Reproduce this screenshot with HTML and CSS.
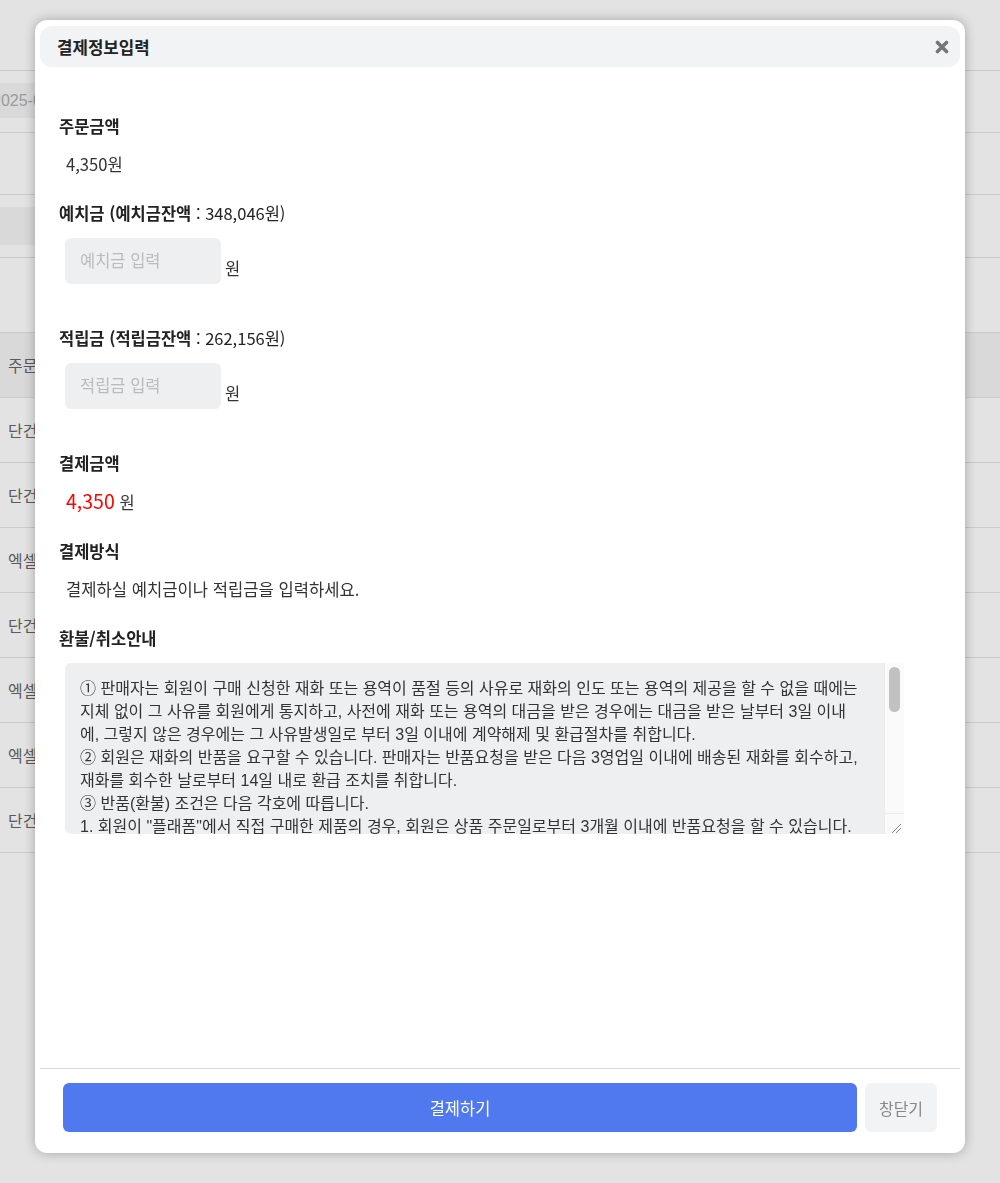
FILE: index.html
```html
<!DOCTYPE html>
<html lang="ko">
<head>
<meta charset="utf-8">
<title>결제정보입력</title>
<link rel="stylesheet" href="styles.css">
</head>
<body>
<div class="page">
  <div class="bg-row r1"></div>
  <div class="bg-row r2"><div class="bg-field">2025-01-01 ~ 2025-01-31</div></div>
  <div class="bg-row r3"></div>
  <div class="bg-row r4"><div class="bg-field tall"></div></div>
  <div class="bg-row r5"></div>
  <div class="bg-row thead"><span>주문구분</span></div>
  <div class="bg-row trow"><span>단건결제</span></div>
  <div class="bg-row trow"><span>단건결제</span></div>
  <div class="bg-row trow"><span>엑셀업로드</span></div>
  <div class="bg-row trow"><span>단건결제</span></div>
  <div class="bg-row trow"><span>엑셀업로드</span></div>
  <div class="bg-row trow"><span>엑셀업로드</span></div>
  <div class="bg-row trow"><span>단건결제</span></div>
</div>

<div class="modal">
  <div class="modal-head">
    <h2 class="modal-title">결제정보입력</h2>
    <button class="close-x" type="button" aria-label="닫기">
      <svg width="14" height="14" viewBox="0 0 14 14"><path d="M2.5 2.5 L11.5 11.5 M11.5 2.5 L2.5 11.5" stroke="#767676" stroke-width="3.6" stroke-linecap="round" fill="none"/></svg>
    </button>
  </div>

  <div class="modal-body">
    <div class="field">
      <div class="label">주문금액</div>
      <div class="value">4,350원</div>
    </div>

    <div class="field with-input">
      <div class="label">예치금 (예치금잔액 <span class="normal">: 348,046원)</span></div>
      <div class="input-row">
        <input class="amount-input" type="text" placeholder="예치금 입력">
        <span class="unit">원</span>
      </div>
    </div>

    <div class="field with-input">
      <div class="label">적립금 (적립금잔액 <span class="normal">: 262,156원)</span></div>
      <div class="input-row">
        <input class="amount-input" type="text" placeholder="적립금 입력">
        <span class="unit">원</span>
      </div>
    </div>

    <div class="field">
      <div class="label">결제금액</div>
      <div class="value"><span class="total">4,350</span> <span class="total-unit">원</span></div>
    </div>

    <div class="field">
      <div class="label">결제방식</div>
      <div class="value">결제하실 예치금이나 적립금을 입력하세요.</div>
    </div>

    <div class="field">
      <div class="label">환불/취소안내</div>
      <div class="terms-box">
        <textarea class="terms" readonly wrap="off">① 판매자는 회원이 구매 신청한 재화 또는 용역이 품절 등의 사유로 재화의 인도 또는 용역의 제공을 할 수 없을 때에는
지체 없이 그 사유를 회원에게 통지하고, 사전에 재화 또는 용역의 대금을 받은 경우에는 대금을 받은 날부터 3일 이내
에, 그렇지 않은 경우에는 그 사유발생일로 부터 3일 이내에 계약해제 및 환급절차를 취합니다.
② 회원은 재화의 반품을 요구할 수 있습니다. 판매자는 반품요청을 받은 다음 3영업일 이내에 배송된 재화를 회수하고,
재화를 회수한 날로부터 14일 내로 환급 조치를 취합니다.
③ 반품(환불) 조건은 다음 각호에 따릅니다.
1. 회원이 "플래폼"에서 직접 구매한 제품의 경우, 회원은 상품 주문일로부터 3개월 이내에 반품요청을 할 수 있습니다.
2. 회원이 구매한 제품의 포장을 개봉하였거나 사용한 경우에는 반품요청을 할 수 없습니다.
3. 제품의 하자 또는 오배송의 경우에는 배송비를 판매자가 부담합니다.
4. 단순 변심에 의한 반품의 경우에는 왕복 배송비를 회원이 부담합니다.
④ 다음 각호의 경우에는 반품(환불)이 제한됩니다.
1. 회원의 책임 있는 사유로 재화가 멸실 또는 훼손된 경우
2. 회원의 사용 또는 일부 소비에 의하여 재화의 가치가 현저히 감소한 경우
3. 시간의 경과에 의하여 재판매가 곤란할 정도로 재화의 가치가 현저히 감소한 경우
4. 복제가 가능한 재화의 포장을 훼손한 경우
⑤ 예치금 및 적립금으로 결제한 금액은 취소 시 결제하신 수단으로 환급됩니다.
⑥ 적립금은 현금으로 환급되지 않으며, 유효기간이 지난 적립금은 소멸됩니다.
⑦ 기타 환불 및 취소에 관한 사항은 관련 법령 및 회사의 정책에 따릅니다.
</textarea>
        <div class="scrollbar" aria-hidden="true">
          <div class="scroll-track"><div class="scroll-thumb"></div></div>
          <div class="scroll-corner">
            <svg width="20" height="21" viewBox="0 0 20 21"><path d="M8 19 L17 10 M12 19 L17 14" stroke="#8a8a8a" stroke-width="1" fill="none"/></svg>
          </div>
        </div>
      </div>
    </div>
  </div>

  <div class="modal-foot">
    <button class="btn-pay" type="button">결제하기</button>
    <button class="btn-close" type="button">창닫기</button>
  </div>
</div>
</body>
</html>
```

FILE: styles.css
```css
html, body {
  margin: 0;
  padding: 0;
}
body {
  background: #e3e3e3;
  font-family: "Noto Sans CJK KR", "Noto Sans", sans-serif;
  width: 1000px;
  height: 1183px;
  overflow: hidden;
}

/* background page (dimmed) */
.page {
  width: 1000px;
}
.bg-row {
  box-sizing: border-box;
  border-bottom: 1px solid #cbcbcb;
  display: flex;
  align-items: center;
  font-size: 16px;
  color: #5a5a5a;
}
.r1 { height: 71px; }
.r2 { height: 62px; align-items: flex-start; }
.r3 { height: 62px; }
.r4 { height: 63px; align-items: flex-start; }
.r5 { height: 75px; }
.bg-field {
  margin: 12px 0 0 -18px;
  width: 700px;
  height: 35px;
  background: #d9d9d9;
  color: #9b9b9b;
  font-family: "Liberation Sans", "Noto Sans CJK KR", sans-serif;
  font-size: 16px;
  line-height: 35px;
  padding-left: 10px;
  box-sizing: border-box;
}
.bg-field.tall {
  margin-left: 0;
  height: 38px;
}
.thead {
  height: 65px;
  background: #d9d9d9;
}
.trow {
  height: 65px;
}
.thead span, .trow span {
  padding-left: 8px;
}

/* modal */
.modal {
  position: fixed;
  top: 20px;
  left: 35px;
  width: 930px;
  height: 1133px;
  box-sizing: border-box;
  padding: 6px 5px 0;
  background: #fff;
  border-radius: 12px;
  box-shadow: 0 0 12px rgba(0, 0, 0, 0.28);
  display: flex;
  flex-direction: column;
}
.modal-head {
  height: 41px;
  flex: none;
  background: #f2f3f5;
  border-radius: 12px;
  display: flex;
  align-items: center;
  justify-content: space-between;
  padding: 0 11px 0 17px;
}
.modal-title {
  margin: 0;
  font-size: 16.8px;
  font-weight: 700;
  color: #222;
  line-height: 22px;
}
.close-x {
  border: none;
  background: none;
  padding: 0;
  width: 14px;
  height: 14px;
  display: flex;
}

.modal-body {
  flex: 1;
  padding: 47px 0 0 19px;
}
.field + .field {
  margin-top: 25px;
}
.field.with-input {
  padding-bottom: 17px;
}
.label {
  font-size: 16.5px;
  font-weight: 700;
  line-height: 24px;
  color: #222;
}
.label .normal {
  font-weight: 400;
}
.value {
  margin-top: 14px;
  padding-left: 7px;
  font-size: 16.6px;
  line-height: 24px;
  color: #333;
}
.total {
  color: #ff0000;
  font-size: 19.5px;
}
.total-unit {
  font-size: 16.5px;
}
.input-row {
  margin-top: 13px;
  display: flex;
  align-items: flex-end;
  padding-left: 6px;
}
.amount-input {
  width: 156px;
  height: 46px;
  box-sizing: border-box;
  border: none;
  border-radius: 6px;
  background: #eeeff1;
  padding: 0 0 2px 15px;
  font-family: inherit;
  font-size: 16.5px;
  color: #333;
  outline: none;
}
.amount-input::placeholder {
  color: #bbbbbb;
}
.unit {
  margin-left: 4px;
  font-size: 16.5px;
  line-height: 24px;
  padding-bottom: 4px;
  color: #333;
}

.terms-box {
  margin: 13px 0 0 6px;
  width: 839px;
  height: 171px;
  display: flex;
  background: #eeeff1;
  border-radius: 6px 0 0 6px;
  overflow: hidden;
}
.terms {
  flex: 1;
  min-width: 0;
  height: 171px;
  box-sizing: border-box;
  border: none;
  background: transparent;
  padding: 14px 15px;
  font-family: "Liberation Sans", "Noto Sans CJK KR", sans-serif;
  font-size: 16px;
  line-height: 23px;
  color: #333;
  white-space: pre;
  overflow: hidden;
  resize: none;
  outline: none;
}
.scrollbar {
  width: 20px;
  flex: none;
  display: flex;
  flex-direction: column;
  background: #fafafa;
  box-shadow: inset 1px 0 0 #ececec;
}
.scroll-track {
  flex: 1;
  padding: 4px 4px 0 5px;
}
.scroll-thumb {
  height: 45px;
  border-radius: 6px;
  background: #c1c1c1;
}
.scroll-corner {
  height: 21px;
  flex: none;
  border-top: 1px solid #ececec;
  box-sizing: border-box;
  display: flex;
}

.modal-foot {
  flex: none;
  border-top: 1px solid #d8d8d8;
  padding: 14px 23px 21px;
  display: flex;
  gap: 8px;
}
.btn-pay {
  flex: 1;
  height: 49px;
  border: none;
  border-radius: 6px;
  background: #5079f0;
  color: #fff;
  font-family: inherit;
  font-size: 16.5px;
}
.btn-close {
  width: 72px;
  height: 49px;
  border: none;
  border-radius: 6px;
  background: #f2f3f5;
  color: #888;
  font-family: inherit;
  font-size: 16px;
}
```
